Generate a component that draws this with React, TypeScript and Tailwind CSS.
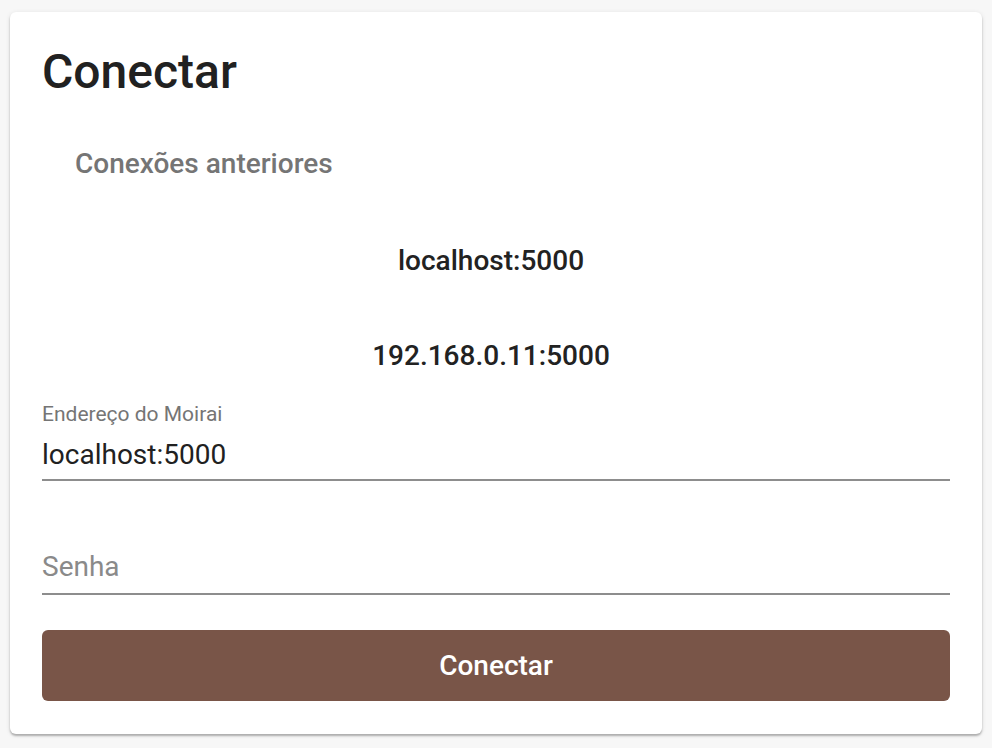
export default function App() {
  const previous = ['localhost:5000', '192.168.0.11:5000']

  return (
    <div className="min-h-screen bg-[#f7f7f7] px-[10px] pt-[12px] font-['Roboto',sans-serif]">
      <div className="rounded-md bg-white px-8 pb-[33px] pt-[40px] shadow-[0_2px_2px_rgba(0,0,0,0.25),0_1px_5px_rgba(0,0,0,0.1)]">
        <h1 className="text-[48px] leading-[40px] font-medium text-[#212121]">Conectar</h1>

        <div className="mt-[56px] pl-[33px] text-[28px] leading-[32px] font-medium text-[#757575]">
          Conexões anteriores
        </div>

        <ul className="mt-[65px] flex flex-col gap-[63px] pr-[10px]">
          {previous.map((p) => (
            <li key={p} className="text-center text-[28px] leading-[32px] font-medium text-[#222222]">
              {p}
            </li>
          ))}
        </ul>

        <div className="mt-[30px]">
          <label className="block text-[21px] leading-[24px] text-[#757575]">Endereço do Moirai</label>
          <div className="border-b-2 border-[#8d8d8d] pb-[8px] pt-[13px] text-[28px] leading-[32px] text-[#212121]">
            localhost:5000
          </div>
        </div>

        <div className="mt-[70px] border-b-2 border-[#8d8d8d] pb-[10px] text-[28px] leading-[32px] text-[#8a8a8a]">
          Senha
        </div>

        <button
          type="button"
          className="mt-[35px] flex h-[71px] w-full items-center justify-center rounded-md bg-[#795548] text-[28px] font-medium text-white"
        >
          Conectar
        </button>
      </div>
    </div>
  )
}
